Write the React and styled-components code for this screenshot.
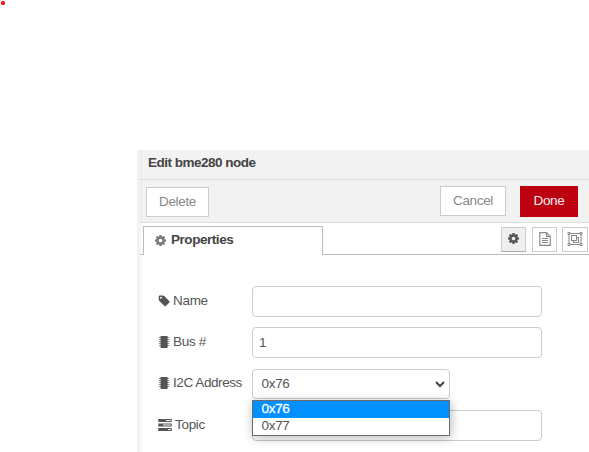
import React from "react";
import styled, { createGlobalStyle } from "styled-components";

const GlobalStyle = createGlobalStyle`
  *, *::before, *::after { box-sizing: border-box; }
  body { margin: 0; background: #fff; overflow: hidden; }
  svg { display: block; flex: none; }
`;

const Page = styled.div`
  width: 589px;
  height: 452px;
  padding: 150px 0 0 137px;
  overflow: hidden;
  position: relative;
  font: 13.5px/20px "Liberation Sans", Arial, sans-serif;
  letter-spacing: -0.3px;
  color: #555;
  white-space: nowrap;
`;

const RecordDot = styled.span`
  position: absolute;
  left: 1px;
  top: 1px;
  width: 4px;
  height: 4px;
  border-radius: 1.5px;
  background: #ff1018;
`;

const Tray = styled.section`
  display: flex;
  height: 302px;
`;

const ResizeEdge = styled.div`
  flex: 0 0 3px;
  background: #f2f2f2;
`;

const TrayContent = styled.div`
  flex: 1;
  min-width: 0;
  background: linear-gradient(to right, #f8f8f8, #fff 4px);
`;

const Header = styled.header`
  height: 30px;
  padding: 3px 8px 0;
  border-bottom: 1px solid #ddd;
  background: linear-gradient(to right, #ececec, #f2f2f2 3px);
  color: #444;
  font-weight: bold;
  letter-spacing: -0.5px;
`;

const Toolbar = styled.div`
  display: flex;
  align-items: flex-start;
  height: 43px;
  padding: 6px 11px 0 6px;
  border-bottom: 1px solid #ddd;
  background: linear-gradient(to right, #ececec, #f2f2f2 3px);
`;

const Button = styled.button`
  width: ${(p) => p.$width}px;
  height: ${(p) => (p.$primary ? 31 : 30)}px;
  margin: ${(p) => p.$margin || "0"};
  padding: 0 0 ${(p) => (p.$primary ? 2 : 1)}px;
  border: 1px solid ${(p) => (p.$primary ? "#bd000f" : "#ccc")};
  background: ${(p) => (p.$primary ? "#bd000f" : "#fff")};
  color: ${(p) => (p.$primary ? "#eee" : "#888")};
  font: inherit;
  letter-spacing: -0.35px;
`;

const TabBar = styled.div`
  display: flex;
  height: 32px;
  padding-top: 3px;
`;

const TabGap = styled.div`
  width: ${(p) => p.$width || 0}px;
  flex: ${(p) => (p.$width ? "none" : "1")};
  border-bottom: 1px solid #bbb;
`;

const Tab = styled.div`
  display: flex;
  align-items: center;
  gap: 4px;
  width: 180px;
  padding: 0 0 2px 10px;
  border: 1px solid #bbb;
  border-bottom: 0;
  background: #fff;
  color: #444;
  font-weight: bold;
  letter-spacing: -0.45px;
  svg { color: #777; }
`;

const TabTools = styled.div`
  display: flex;
  gap: 5px;
  padding: 1px 1px 0 0;
  border-bottom: 1px solid #bbb;
`;

const IconButton = styled.button`
  display: flex;
  align-items: center;
  justify-content: center;
  width: ${(p) => p.$width || 25}px;
  height: 25px;
  margin-right: ${(p) => (p.$active ? 1 : 0)}px;
  padding: 0 0 ${(p) => (p.$active ? 2 : 1)}px;
  border: 1px solid #ccc;
  border-bottom-color: ${(p) => (p.$active ? "#aaa" : "#ccc")};
  background: ${(p) => (p.$active ? "#efefef" : "#fff")};
  color: ${(p) => (p.$active ? "#555" : "#888")};
`;

const Form = styled.form`
  display: grid;
  grid-template-rows: 31px 31px 32px 31px;
  row-gap: 10px;
  padding: 31px 0 0 18px;
`;

const Row = styled.div`
  display: grid;
  grid-template-columns: 94px 290px;
  align-items: center;
  position: relative;
`;

const Label = styled.label`
  display: flex;
  align-items: center;
  gap: 3px;
  padding-bottom: ${(p) => p.$lift || 2}px;
  letter-spacing: ${(p) => p.$tracking || -0.3}px;
`;

const Input = styled.div`
  height: 31px;
  padding: 5px 6px;
  border: 1px solid #ccc;
  border-radius: 4px;
  background: #fff;
`;

const Select = styled.div`
  display: flex;
  align-items: center;
  justify-content: space-between;
  align-self: start;
  width: 198px;
  height: 30px;
  margin-top: 1px;
  padding: 0 4px 0 8.5px;
  border: 1px solid #ccc;
  border-radius: 4px;
  background: #fff;
`;

const Options = styled.div`
  position: absolute;
  z-index: 1;
  left: 94px;
  top: 32px;
  width: 198px;
  height: 36px;
  border: 1px solid #706b6b;
  background: #fff;
  box-shadow: 1px 2px 10px rgba(0, 0, 0, 0.28);
`;

const Option = styled.div`
  height: 17px;
  padding-left: 8.5px;
  background: ${(p) => (p.$selected ? "#0090ff" : "#fff")};
  color: ${(p) => (p.$selected ? "#fff" : "#555")};
  line-height: 16px;
  -webkit-text-stroke: ${(p) => (p.$selected ? "0.3px #fff" : "0")};
`;

const CogIcon = () => (
  <svg width="13" height="13" viewBox="0 0 1792 1792" fill="currentColor">
    <path d="M1152 896q0-106-75-181t-181-75-181 75-75 181 75 181 181 75 181-75 75-181zm512-109v222q0 12-8 23t-20 13l-185 28q-19 54-39 91 35 50 107 138 10 12 10 25t-9 23q-27 37-99 108t-94 71q-12 0-26-9l-138-108q-44 23-91 38-16 136-29 186-7 28-36 28h-222q-14 0-24.500-8.500t-11.500-21.500l-28-184q-49-16-90-37l-141 107q-10 9-25 9-14 0-25-11-126-114-165-168-7-10-7-23 0-12 8-23 15-21 51-66.500t54-70.500q-27-50-41-99l-183-27q-13-2-21-12.500t-8-23.500v-222q0-12 8-23t19-13l186-28q14-46 39-92-40-57-107-138-10-12-10-24 0-10 9-23 26-36 98.500-107.500t94.500-71.500q13 0 26 10l138 107q44-23 91-38 16-136 29-186 7-28 36-28h222q14 0 24.500 8.500t11.500 21.500l28 184q49 16 90 37l142-107q9-9 24-9 13 0 25 10 129 119 165 170 7 8 7 22 0 12-8 23-15 21-51 66.500t-54 70.500q26 50 41 98l183 28q13 2 21 12.500t8 23.500z" />
  </svg>
);

const TagIcon = () => (
  <svg width="12" height="14" viewBox="-100 0 1664 1792" fill="currentColor">
    <path d="M448 448q0-53-37.500-90.500t-90.500-37.500-90.500 37.500-37.500 90.500 37.500 90.500 90.500 37.500 90.500-37.500 37.500-90.500zm1067 576q0 53-37 90l-491 492q-39 37-91 37-53 0-90-37l-715-716q-38-37-64.500-101t-26.500-117v-416q0-52 38-90t90-38h416q53 0 117 26.500t102 64.500l715 714q37 39 37 91z" />
  </svg>
);

const ChipIcon = () => (
  <svg width="12" height="14" viewBox="0 0 12 14" fill="currentColor">
    <rect x="2.600" y="1" width="7" height="12" rx=".3" />
    <path d="M.8 2.500h10.600M.8 4.500h10.600M.8 6.500h10.600M.8 8.500h10.600M.8 10.500h10.600" stroke="currentColor" strokeOpacity=".65" strokeWidth="1" />
  </svg>
);

const TasksIcon = () => (
  <svg width="14" height="14" viewBox="0 0 14 14">
    <path fill="currentColor" fillRule="evenodd" d="M.3 1h13.400v3H.3zM8 2h4.700v1H8zM.3 5.500h13.400v3H.3zM5 6.500h7.700v1H5zM.3 10h13.400v3H.3zM10 11h2.700v1H10z" />
  </svg>
);

const DocumentIcon = () => (
  <svg width="12" height="14" viewBox="0 0 12 14" fill="none" stroke="currentColor" strokeWidth="1.150">
    <path d="M.8.6h6.700l3.800 3.800v9H.8zM7.500.7v3.700h3.700M3 6.500h6M3 8.500h6M3 10.500h6" />
  </svg>
);

const GroupIcon = () => (
  <svg width="16" height="14" viewBox="0 0 16 14" fill="none" stroke="currentColor">
    <path d="M3 1.500h10M3 12.500h10M2 3v8M14 3v8" />
    <path fill="#fff" d="M1 .5h2v2H1zM13 .5h2v2h-2zM1 11.500h2v2H1zM13 11.500h2v2h-2z" />
    <path strokeWidth="1.100" d="M4.500 3.500h5v5h-5zM9.500 5.500h2v5h-5v-2" />
  </svg>
);

const Chevron = () => (
  <svg width="10" height="7" viewBox="0 0 10 7" fill="none" stroke="#444" strokeWidth="2">
    <path d="M1 1l4 4 4-4" />
  </svg>
);

export default function App() {
  return (
    <Page>
      <GlobalStyle />
      <RecordDot />
      <Tray>
        <ResizeEdge />
        <TrayContent>
          <Header>Edit bme280 node</Header>
          <Toolbar>
            <Button $width={63} $margin="1px auto 0 0">Delete</Button>
            <Button $width={66} $margin="0 14px 0 0">Cancel</Button>
            <Button $width={58} $primary>Done</Button>
          </Toolbar>
          <TabBar>
            <TabGap $width={3} />
            <Tab><CogIcon />Properties</Tab>
            <TabGap />
            <TabTools>
              <IconButton $active><CogIcon /></IconButton>
              <IconButton><DocumentIcon /></IconButton>
              <IconButton $width={26}><GroupIcon /></IconButton>
            </TabTools>
          </TabBar>
          <Form>
            <Row><Label><TagIcon />Name</Label><Input /></Row>
            <Row><Label><ChipIcon />Bus #</Label><Input>1</Input></Row>
            <Row>
              <Label $lift={3} $tracking={-0.42}><ChipIcon />I2C Address</Label>
              <Select>0x76<Chevron /></Select>
              <Options>
                <Option $selected>0x76</Option>
                <Option>0x77</Option>
              </Options>
            </Row>
            <Row><Label><TasksIcon />Topic</Label><Input /></Row>
          </Form>
        </TrayContent>
      </Tray>
    </Page>
  );
}
